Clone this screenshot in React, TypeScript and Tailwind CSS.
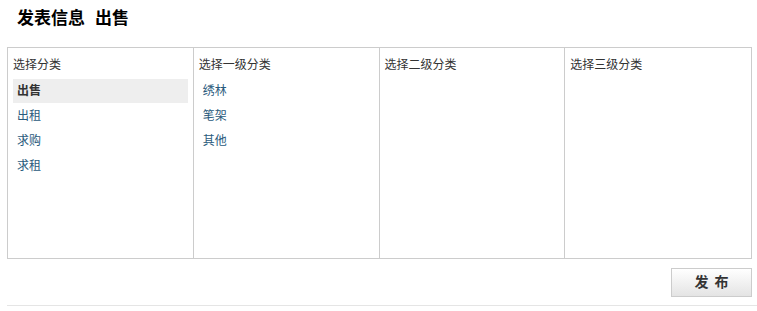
import React, { useState } from "react";

const columns = [
  { title: "选择分类", items: ["出售", "出租", "求购", "求租"] },
  { title: "选择一级分类", items: ["绣林", "笔架", "其他"] },
  { title: "选择二级分类", items: [] as string[] },
  { title: "选择三级分类", items: [] as string[] },
];

export default function App() {
  const [selected] = useState("出售");

  return (
    <div
      className="w-[757px] h-[311px] bg-white text-[#333] text-[12px]"
      style={{ fontFamily: '"Liberation Sans", "Noto Sans CJK SC", sans-serif' }}
    >
      <h1 className="pl-[17px] pt-[9px] h-[47px] text-[17px] font-bold text-black leading-[20px]">
        发表信息<span className="ml-[10px]">出售</span>
      </h1>
      <div className="ml-[7px] w-[745px] h-[212px] border border-[#cccccc] grid grid-cols-4">
        {columns.map((col, i) => (
          <div
            key={col.title}
            className={`px-[5px] pt-[10px] ${i < 3 ? "border-r border-[#cccccc]" : ""}`}
          >
            <div className="leading-[14px] mb-[7px]">{col.title}</div>
            <ul>
              {col.items.map((item) => (
                <li
                  key={item}
                  className={`h-[24px] mb-[1px] pl-[4px] leading-[24px] ${
                    i === 0 && item === selected
                      ? "bg-[#eeeeee] font-bold text-[#333]"
                      : "text-[#2a5a7c]"
                  }`}
                >
                  {item}
                </li>
              ))}
            </ul>
          </div>
        ))}
      </div>
      <div className="flex justify-end w-[752px] pt-[9px] pb-[8px]">
        <button className="w-[81px] h-[29px] border border-[#cccccc] bg-gradient-to-b from-white to-[#e4e4e4] text-[14px] font-bold text-[#333] tracking-[6px] pl-[6px]">
          发布
        </button>
      </div>
      <div className="ml-[7px] border-t border-[#e5e5e5]" />
    </div>
  );
}
